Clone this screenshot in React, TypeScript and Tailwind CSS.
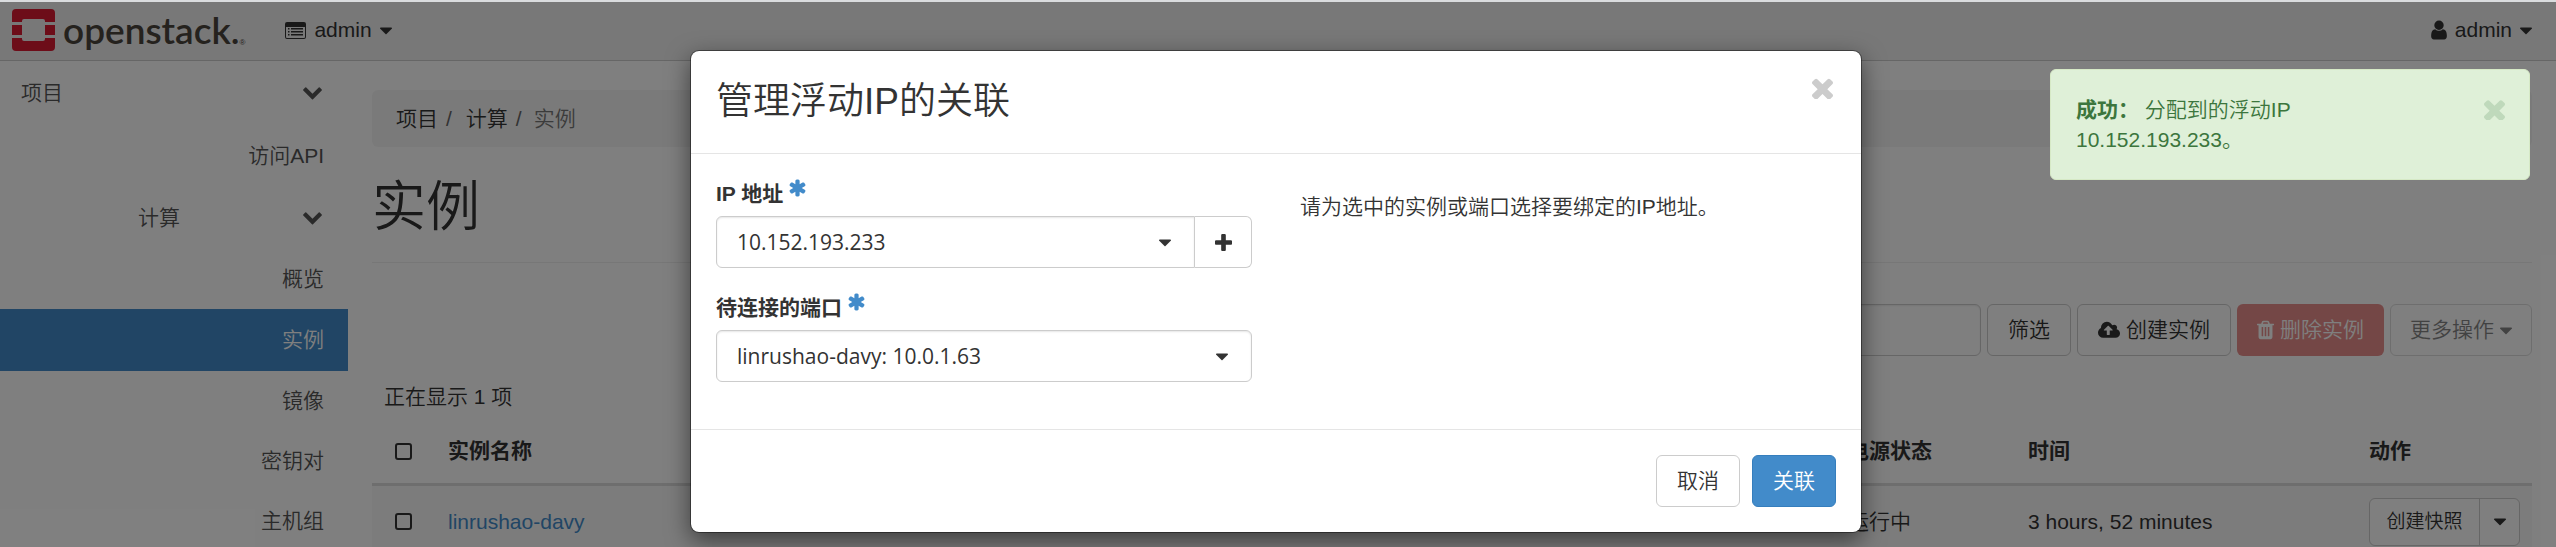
import React from 'react';

type IconProps = { d: string; box: string; className: string };

function Icon({ d, box, className }: IconProps) {
  return (
    <svg viewBox={box} fill="currentColor" aria-hidden="true" className={className}>
      <path d={d} />
    </svg>
  );
}

const TIMES =
  'M1490 1322q0 40-28 68l-136 136q-28 28-68 28t-68-28l-294-294-294 294q-28 28-68 28t-68-28l-136-136q-28-28-28-68t28-68l294-294-294-294q-28-28-28-68t28-68l136-136q28-28 68-28t68 28l294 294 294-294q28-28 68-28t68 28l136 136q28 28 28 68t-28 68l-294 294 294 294q28 28 28 68z';
const PLUS =
  'M1600 736v192q0 40-28 68t-68 28h-416v416q0 40-28 68t-68 28h-192q-40 0-68-28t-28-68v-416h-416q-40 0-68-28t-28-68v-192q0-40 28-68t68-28h416v-416q0-40 28-68t68-28h192q40 0 68 28t28 68v416h416q40 0 68 28t28 68z';
const CARET =
  'M1408 704q0 26-19 45l-448 448q-19 19-45 19t-45-19l-448-448q-19-19-19-45t19-45 45-19h896q26 0 45 19t19 45z';
const CHEVRON =
  'M1683 808l-742 741q-19 19-45 19t-45-19l-742-741q-19-19-19-45.5t19-45.5l166-165q19-19 45-19t45 19l531 531 531-531q19-19 45-19t45 19l166 165q19 19 19 45.5t-19 45.5z';
const USER =
  'M1536 1399q0 109-62.5 187t-150.5 78h-854q-88 0-150.5-78t-62.5-187q0-85 8.5-160.5t31.5-152 58.5-131 94-89 134.5-34.5q131 128 313 128t313-128q76 0 134.5 34.5t94 89 58.5 131 31.5 152 8.5 160.5zm-256-887q0 159-112.5 271.5t-271.5 112.5-271.5-112.5-112.5-271.5 112.5-271.5 271.5-112.5 271.5 112.5 112.5 271.5z';
const CLOUD_UPLOAD =
  'M1280 864q0-14-9-23l-352-352q-9-9-23-9t-23 9l-351 351q-10 12-10 24 0 14 9 23t23 9h224v352q0 13 9.500 22.500t22.500 9.500h192q13 0 22.500-9.500t9.500-22.500v-352h224q13 0 22.500-9.500t9.500-22.500zm640 288q0 159-112.500 271.500t-271.500 112.500h-1088q-185 0-316.500-131.500t-131.500-316.500q0-130 70-240t188-165q-2-30-2-43 0-212 150-362t362-150q156 0 285.500 87t188.500 231q71-62 166-62 106 0 181 75t75 181q0 76-41 138 130 31 213.500 135.500t83.500 238.500z';
const TRASH =
  'M704 1376v-704q0-14-9-23t-23-9h-64q-14 0-23 9t-9 23v704q0 14 9 23t23 9h64q14 0 23-9t9-23zm256 0v-704q0-14-9-23t-23-9h-64q-14 0-23 9t-9 23v704q0 14 9 23t23 9h64q14 0 23-9t9-23zm256 0v-704q0-14-9-23t-23-9h-64q-14 0-23 9t-9 23v704q0 14 9 23t23 9h64q14 0 23-9t9-23zm-544-992h448l-48-117q-7-9-17-11h-317q-10 2-17 11zm928 32v64q0 14-9 23t-23 9h-96v948q0 83-47 143.5t-113 60.5h-832q-66 0-113-58.5t-47-141.5v-952h-96q-14 0-23-9t-9-23v-64q0-14 9-23t23-9h309l70-167q15-37 54-63t79-26h320q40 0 79 26t54 63l70 167h309q14 0 23 9t9 23z';
const ASTERISK =
  'M1546 1050q46 26 59.5 77.5t-12.5 97.5l-64 110q-26 46-77.5 59.5t-97.5-12.5l-266-153v307q0 52-38 90t-90 38h-128q-52 0-90-38t-38-90v-307l-266 153q-46 26-97.5 12.5t-77.5-59.5l-64-110q-26-46-12.5-97.5t59.5-77.5l266-154-266-154q-46-26-59.5-77.5t12.5-97.5l64-110q26-46 77.5-59.5t97.5 12.5l266 153v-307q0-52 38-90t90-38h128q52 0 90 38t38 90v307l266-153q46-26 97.5-12.5t77.5 59.5l64 110q26 46 12.5 97.5t-59.5 77.5l-266 154z';

function Caret() {
  return <Icon d={CARET} box="384 0 1024 1792" className="h-[21px] w-3 shrink-0" />;
}

function Logo() {
  return (
    <a href="#" className="flex h-full items-center gap-2 text-[#4a443c]">
      <svg viewBox="0 0 43 42" className="h-[42px] w-[43px]" aria-hidden="true">
        <g fill="#da1a32">
          <path d="M4 0h35a4 4 0 0 1 4 4v9h-10v-1a2 2 0 0 0-2-2H12a2 2 0 0 0-2 2v1H0V4a4 4 0 0 1 4-4z" />
          <path d="M4 42h35a4 4 0 0 0 4-4v-9h-10v1a2 2 0 0 1-2 2H12a2 2 0 0 1-2-2v-1H0v9a4 4 0 0 0 4 4z" />
          <path d="M0 16h10v10H0zM33 16h10v10H33z" />
        </g>
      </svg>
      <span className="flex items-end">
        <span className="font-[Lato,sans-serif] text-[37px] leading-[42px] font-semibold">openstack.</span>
        <span className="pb-1 text-[8px] leading-[8px]">®</span>
      </span>
    </a>
  );
}

function ListIcon() {
  return (
    <svg viewBox="0 0 21 17" className="h-[17px] w-[21px]" aria-hidden="true">
      <path
        fill="currentColor"
        fillRule="evenodd"
        d="M2 0h17a2 2 0 0 1 2 2v13a2 2 0 0 1-2 2H2a2 2 0 0 1-2-2V2a2 2 0 0 1 2-2zM1 5v10q0 1 1 1h17q1 0 1-1V5z"
      />
      <path
        fill="currentColor"
        d="M3 6h1.500v1.400H3zM3 9h1.500v1.400H3zM3 12h1.500v1.400H3zM6 6h12v1.400H6zM6 9h12v1.400H6zM6 12h12v1.400H6z"
      />
    </svg>
  );
}

function Navbar() {
  return (
    <header className="flex h-[59px] items-center justify-between border-b border-[#cccccc] bg-[#f0f0f0] pr-6 pb-0.5 pl-3">
      <div className="flex items-center gap-10">
        <Logo />
        <button type="button" className="flex items-center gap-2">
          <ListIcon />
          <span>admin</span>
          <Caret />
        </button>
      </div>
      <button type="button" className="flex items-center gap-2">
        <Icon d={USER} box="256 0 1280 1792" className="h-[22px] w-4" />
        <span>admin</span>
        <Caret />
      </button>
    </header>
  );
}

const panels = ['概览', '实例', '镜像', '密钥对', '主机组'];

function Sidebar() {
  return (
    <nav className="w-[348px] shrink-0 text-[#555555]">
      <button type="button" className="flex h-16 w-full items-center justify-between pr-[25px] pl-[21px]">
        <span>项目</span>
        <Icon d={CHEVRON} box="0 170 1792 1792" className="h-[21px] w-[21px]" />
      </button>
      <a href="#" className="flex h-[62px] items-center justify-end pr-6">
        访问API
      </a>
      <button type="button" className="flex h-[62px] w-full items-center justify-between pr-[25px] pl-[138px]">
        <span>计算</span>
        <Icon d={CHEVRON} box="0 170 1792 1792" className="h-[21px] w-[21px]" />
      </button>
      {panels.map((name) => (
        <a
          key={name}
          href="#"
          className={
            name === '实例'
              ? 'flex h-[62px] items-center justify-end bg-[#428bca] pr-6 text-white'
              : 'flex h-[60px] items-center justify-end pr-6'
          }
        >
          {name}
        </a>
      ))}
    </nav>
  );
}

function Toolbar() {
  return (
    <div className="mt-[41px] flex h-[52px] justify-end gap-1.5">
      <input
        type="text"
        aria-label="筛选条件"
        className="w-[420px] rounded-md border border-[#cccccc] px-[18px] shadow-[inset_0_1px_2px_rgba(0,0,0,0.08)]"
      />
      <button type="button" className="rounded-md border border-[#cccccc] px-5">
        筛选
      </button>
      <button type="button" className="flex items-center gap-1.5 rounded-md border border-[#cccccc] px-5">
        <Icon d={CLOUD_UPLOAD} box="0 0 1920 1792" className="h-[21px] w-[22px]" />
        创建实例
      </button>
      <button type="button" disabled className="flex items-center gap-1.5 rounded-md bg-[#e88f8d] px-5 text-white">
        <Icon d={TRASH} box="192 0 1408 1792" className="h-[22px] w-[17px]" />
        删除实例
      </button>
      <button
        type="button"
        disabled
        className="flex items-center gap-1.5 rounded-md border border-[#dddddd] px-[19px] text-[#858585]"
      >
        更多操作
        <Caret />
      </button>
    </div>
  );
}

function Check({ label }: { label: string }) {
  return (
    <input
      type="checkbox"
      aria-label={label}
      className="block h-[17px] w-[17px] appearance-none rounded-[3px] border-2 border-[#333333]"
    />
  );
}

function InstanceTable() {
  return (
    <table className="w-full table-fixed text-left">
      <colgroup>
        <col className="w-16" />
        <col />
        <col className="w-[180px]" />
        <col className="w-[341px]" />
        <col className="w-[175px]" />
      </colgroup>
      <thead>
        <tr className="h-[64px] border-b-[3px] border-[#dddddd]">
          <th className="pl-[23px]">
            <Check label="全选" />
          </th>
          <th className="px-3">实例名称</th>
          <th className="px-3">电源状态</th>
          <th className="px-3">时间</th>
          <th className="px-3">动作</th>
        </tr>
      </thead>
      <tbody>
        <tr className="h-[74px] bg-[#f9f9f9]">
          <td className="pl-[23px]">
            <Check label="linrushao-davy" />
          </td>
          <td className="px-3">
            <a href="#" className="text-[#428bca]">
              linrushao-davy
            </a>
          </td>
          <td className="px-3">运行中</td>
          <td className="px-3">3 hours, 52 minutes</td>
          <td className="px-3">
            <div className="flex h-12 rounded-md border border-[#cccccc] bg-white text-[19px]">
              <button type="button" className="grow border-r border-[#cccccc] whitespace-nowrap">
                创建快照
              </button>
              <button type="button" aria-label="更多" className="flex w-[39px] items-center justify-center">
                <Caret />
              </button>
            </div>
          </td>
        </tr>
      </tbody>
    </table>
  );
}

function Main() {
  return (
    <main className="grow pt-[29px] pr-6 pl-6">
      <ol className="flex h-[57px] items-center rounded-md bg-[#f5f5f5] px-6">
        <li>
          <a href="#">项目</a>
          <span className="px-2 text-[#666666]">/</span>
        </li>
        <li className="pl-1.5">
          <a href="#">计算</a>
          <span className="px-2 text-[#666666]">/</span>
        </li>
        <li className="pl-1 text-[#777777]">实例</li>
      </ol>
      <h1 className="mt-[30px] border-b border-[#eeeeee] pb-[25px] text-[54px] leading-[60px] font-[350]">实例</h1>
      <Toolbar />
      <p className="mt-[26px] pl-3 leading-[30px]">正在显示 1 项</p>
      <div className="mt-2">
        <InstanceTable />
      </div>
    </main>
  );
}

type FieldLabelProps = { htmlFor: string; children: React.ReactNode };

function FieldLabel({ htmlFor, children }: FieldLabelProps) {
  return (
    <label htmlFor={htmlFor} className="flex h-[30px] items-center gap-1.5 font-bold">
      {children}
      <Icon d={ASTERISK} box="128 0 1536 1792" className="mb-3 h-5 w-[17px] text-[#428bca]" />
    </label>
  );
}

const selectClass =
  'h-[52px] w-full appearance-none border border-[#cccccc] bg-white pl-5 font-["Open_Sans",sans-serif] text-[21px] font-normal shadow-[inset_0_1px_2px_rgba(0,0,0,0.1)]';

function AssociateDialog() {
  return (
    <section
      role="dialog"
      aria-labelledby="dialog-title"
      className="w-full max-w-[1172px] rounded-[9px] border border-black/40 bg-white bg-clip-padding shadow-[0_8px_23px_rgba(0,0,0,0.5)]"
    >
      <div className="flex h-[103px] items-start justify-between border-b border-[#e5e5e5] pt-[26px] pr-7 pl-[25px]">
        <h4 id="dialog-title" className="text-[37px] leading-[50px] font-[350]">
          管理浮动IP的关联
        </h4>
        <button type="button" aria-label="关闭" className="text-[#cccccc]">
          <Icon d={TIMES} box="302 302 1188 1188" className="h-[22px] w-[21px]" />
        </button>
      </div>
      <div className="grid h-[275px] grid-cols-2 gap-12 px-[25px] pt-[25px]">
        <form>
          <FieldLabel htmlFor="ip">IP 地址</FieldLabel>
          <div className="mt-[7px] flex">
            <div className="relative grow">
              <select id="ip" className={`${selectClass} rounded-l-md`}>
                <option>10.152.193.233</option>
              </select>
              <span className="pointer-events-none absolute top-4 right-6">
                <Caret />
              </span>
            </div>
            <button
              type="button"
              aria-label="分配浮动IP"
              className="flex w-[57px] items-center justify-center rounded-r-md border border-l-0 border-[#cccccc]"
            >
              <Icon d={PLUS} box="192 128 1408 1408" className="h-[17px] w-[17px]" />
            </button>
          </div>
          <div className="mt-[25px]">
            <FieldLabel htmlFor="port">待连接的端口</FieldLabel>
            <div className="relative mt-[7px]">
              <select id="port" className={`${selectClass} rounded-md`}>
                <option>linrushao-davy: 10.0.1.63</option>
              </select>
              <span className="pointer-events-none absolute top-4 right-6">
                <Caret />
              </span>
            </div>
          </div>
        </form>
        <p className="pt-[13px] leading-[30px]">请为选中的实例或端口选择要绑定的IP地址。</p>
      </div>
      <div className="flex h-[103px] items-center justify-end gap-3 border-t border-[#e5e5e5] px-[25px]">
        <button type="button" className="h-[52px] rounded-md border border-[#cccccc] px-5">
          取消
        </button>
        <button type="button" className="h-[52px] rounded-md border border-[#357ebd] bg-[#428bca] px-5 text-white">
          关联
        </button>
      </div>
    </section>
  );
}

function SuccessAlert() {
  return (
    <div
      role="alert"
      className="absolute top-[69px] right-[26px] flex h-[111px] w-[480px] items-start justify-between rounded-md border border-[#d6e9c6] bg-[#dff0d8] pt-[25px] pr-6 pl-[25px] text-[#3c763d]"
    >
      <p className="w-[300px] leading-[30px]">
        <strong>成功：</strong> <span>分配到的浮动IP 10.152.193.233。</span>
      </p>
      <button type="button" aria-label="关闭" className="pt-1 text-[#bfd9bb]">
        <Icon d={TIMES} box="302 302 1188 1188" className="h-[21px] w-[21px]" />
      </button>
    </div>
  );
}

export default function App() {
  return (
    <div className='relative h-screen overflow-hidden bg-white font-["Liberation_Sans","Noto_Sans_CJK_SC",sans-serif] text-[21px] leading-[30px] font-[350] text-[#333333]'>
      <div className="h-0.5 bg-[#dadcde]" />
      <Navbar />
      <div className="flex">
        <Sidebar />
        <Main />
      </div>
      <div className="absolute inset-x-0 top-0.5 bottom-0 flex items-start justify-center bg-black/50 pt-12 pr-1">
        <AssociateDialog />
      </div>
      <SuccessAlert />
    </div>
  );
}
